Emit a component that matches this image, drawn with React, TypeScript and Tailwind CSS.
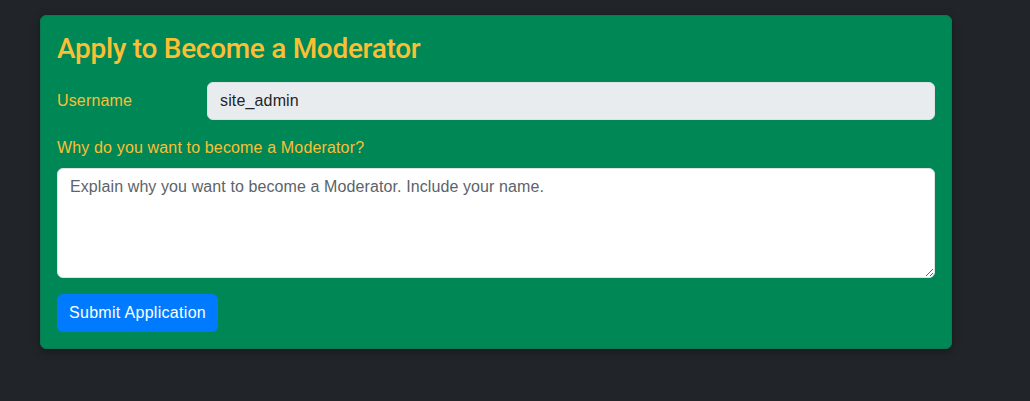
import React from "react";

export default function App() {
  return (
    <div
      className="min-h-[401px] w-full bg-[#212529] pt-[15px] pl-[40px]"
      style={{ fontFamily: '"Liberation Sans", Arial, sans-serif' }}
    >
      <div className="w-[912px] rounded-[6px] border border-[#0b7a52] bg-[#008756] p-4 shadow-[0_2px_8px_rgba(0,0,0,0.35)]">
        <h3
          className="mb-4 text-[28px] leading-[33.6px] font-medium tracking-[-0.3px] text-[#fabf34]"
          style={{ fontFamily: 'Roboto, "Liberation Sans", Arial, sans-serif' }}
        >
          Apply to Become a Moderator
        </h3>
        <div className="mb-4 flex">
          <label className="w-[150px] pt-[7px] pb-[7px] text-[16px] leading-[24px] tracking-[0.15px] text-[#fabf34]">
            Username
          </label>
          <input
            readOnly
            value="site_admin"
            className="h-[38px] flex-1 rounded-[6px] border border-[#dee2e6] bg-[#e9ecef] px-3 text-[16px] leading-[24px] tracking-[0.15px] text-[#212529] outline-none"
          />
        </div>
        <div className="mb-4">
          <label className="mb-2 block text-[16px] leading-[24px] tracking-[0.15px] text-[#fabf34]">
            Why do you want to become a Moderator?
          </label>
          <textarea
            rows={4}
            placeholder="Explain why you want to become a Moderator. Include your name."
            className="block h-[110px] w-full rounded-[6px] border border-[#dee2e6] bg-white px-3 py-[6px] text-[16px] leading-[24px] tracking-[0.1px] text-[#212529] placeholder:text-[#5c636a] outline-none"
          />
        </div>
        <button className="h-[38px] rounded-[6px] bg-[#007bff] px-3 text-[16px] leading-[24px] tracking-[0.3px] text-white">
          Submit Application
        </button>
      </div>
    </div>
  );
}
